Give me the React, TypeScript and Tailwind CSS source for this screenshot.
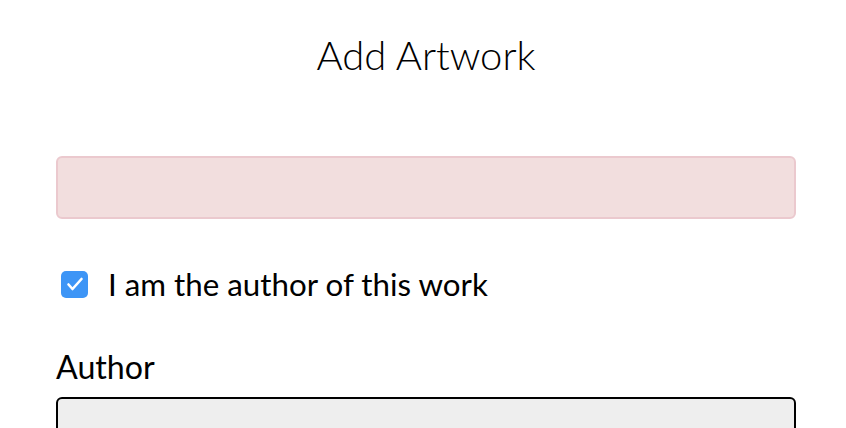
export default function App() {
  return (
    <div className="min-h-screen bg-white text-black overflow-hidden" style={{ fontFamily: "Lato, 'Noto Sans', sans-serif" }}>
      <div className="ml-[56px] w-[740px]">
        <h1 className="pt-[31px] text-center text-[40px] font-light leading-[48px]">Add Artwork</h1>
        <div className="mt-[77px] h-[63px] rounded-[6px] border-2 border-[#ebc9ce] bg-[#f2dede]" />
        <label className="mt-[50px] flex items-center gap-[20px] pl-[5px]">
          <span className="flex h-[27px] w-[27px] items-center justify-center rounded-[5px] bg-[#3d95f6]">
            <svg viewBox="0 0 20 20" className="h-[20px] w-[20px]" fill="none" stroke="white" strokeWidth="2.6" strokeLinecap="round" strokeLinejoin="round">
              <path d="M3.5 10.5l4 4.5 9-10" />
            </svg>
          </span>
          <span className="text-[31.3px] leading-[30px]">I am the author of this work</span>
        </label>
        <div className="mt-[50px] text-[32.2px] leading-[36px]">Author</div>
        <div className="mt-[12px] h-[60px] rounded-[6px] border-2 border-black bg-[#eeeeee]" />
      </div>
    </div>
  );
}
